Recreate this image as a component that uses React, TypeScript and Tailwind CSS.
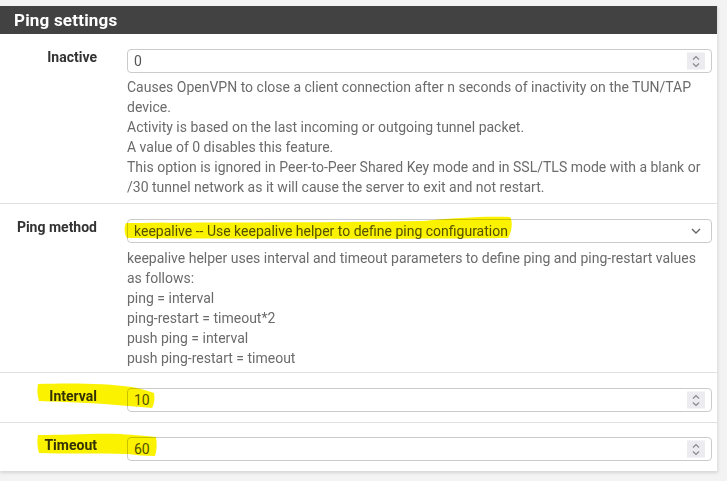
import React from "react";

const font = { fontFamily: "Roboto, 'Liberation Sans', sans-serif" };

const Spinner: React.FC = () => (
    <span className="absolute right-[6px] top-1/2 -translate-y-1/2 w-[18px] h-[17px] bg-[#ececf0] flex flex-col items-center justify-center">
        <svg width="10" height="14" viewBox="0 0 10 14" fill="none" stroke="#8a8a8a" strokeWidth="1.2">
            <path d="M2 5 L5 2 L8 5" />
            <path d="M2 9 L5 12 L8 9" />
        </svg>
    </span>
);

const NumberInput: React.FC<{ value: string }> = ({ value }) => (
    <div className="relative h-[24px] w-full rounded-[4px] border border-[#cbcbcb] bg-white flex items-center px-[6px] text-[14px] text-[#555]">
        {value}
        <Spinner />
    </div>
);

const Label: React.FC<{ children: React.ReactNode }> = ({ children }) => (
    <div className="w-[97px] shrink-0 text-right font-bold text-[14px] text-[#333] -mt-[2px]">{children}</div>
);

const Highlight: React.FC<{ className: string; d: string; w: number; h: number }> = ({ className, d, w, h }) => (
    <svg className={"absolute pointer-events-none mix-blend-multiply " + className} width={w} height={h} viewBox={`0 0 ${w} ${h}`}>
        <path d={d} fill="#fbf200" />
    </svg>
);

export default function App() {
    return (
        <div className="min-h-[481px] bg-[#f3f3f3] pt-[6px]" style={font}>
            <div className="relative w-[718px] bg-white border-r border-[#e2e2e2] shadow-[0_2px_3px_rgba(0,0,0,0.12)]">
                <div className="h-[28px] bg-[#424242] text-white font-bold text-[17px] leading-[28px] pl-[14px] tracking-[0.2px]">
                    Ping settings
                </div>

                {/* Inactive */}
                <div className="flex pt-[15px] pb-[6px] border-b border-[#e0e0e0]">
                    <Label>Inactive</Label>
                    <div className="ml-[30px] w-[585px]">
                        <NumberInput value="0" />
                        <div className="mt-[4px] text-[14px] leading-[20px] text-[#6b6b6b]">
                            Causes OpenVPN to close a client connection after n seconds of inactivity on the TUN/TAP device.<br />
                            Activity is based on the last incoming or outgoing tunnel packet.<br />
                            A value of 0 disables this feature.<br />
                            This option is ignored in Peer-to-Peer Shared Key mode and in SSL/TLS mode with a blank or /30 tunnel network as it will cause the server to exit and not restart.
                        </div>
                    </div>
                </div>

                {/* Ping method */}
                <div className="relative flex pt-[15px] pb-[4px] border-b border-[#e0e0e0]">
                    <Label>Ping method</Label>
                    <div className="ml-[30px] w-[585px]">
                        <div className="relative h-[24px] w-full rounded-[4px] border border-[#cbcbcb] bg-white flex items-center px-[6px] text-[14px] text-[#555]">
                            keepalive -- Use keepalive helper to define ping configuration
                            <svg className="absolute right-[9px] top-1/2 -translate-y-1/2" width="12" height="8" viewBox="0 0 12 8" fill="none" stroke="#666" strokeWidth="1.4">
                                <path d="M2 2 L6 6 L10 2" />
                            </svg>
                        </div>
                        <div className="mt-[5px] text-[14px] leading-[20px] text-[#6b6b6b]">
                            keepalive helper uses interval and timeout parameters to define ping and ping-restart values as follows:<br />
                            ping = interval<br />
                            ping-restart = timeout*2<br />
                            push ping = interval<br />
                            push ping-restart = timeout
                        </div>
                    </div>
                    <Highlight
                        className="left-[124px] top-[8px]"
                        w={390}
                        h={28}
                        d="M2 11 C60 10 200 11 300 9 C330 6 360 4 386 5 C389 9 388 20 384 26 C300 27 150 27 3 26 C0 22 0 14 2 11 Z"
                    />
                </div>

                {/* Interval */}
                <div className="relative flex items-start pt-[15px] pb-[10px] border-b border-[#e0e0e0]">
                    <Label>Interval</Label>
                    <div className="ml-[30px] w-[585px]">
                        <NumberInput value="10" />
                    </div>
                    <Highlight
                        className="left-[36px] top-[8px]"
                        w={120}
                        h={28}
                        d="M2 3 C30 2 70 2 96 6 C106 8 112 10 118 12 C119 18 118 24 116 27 C110 26 100 26 92 25 C60 22 30 21 3 20 C1 14 1 8 2 3 Z"
                    />
                </div>

                {/* Timeout */}
                <div className="relative flex items-start pt-[14px] pb-[10px]">
                    <Label>Timeout</Label>
                    <div className="ml-[30px] w-[585px]">
                        <NumberInput value="60" />
                    </div>
                    <Highlight
                        className="left-[36px] top-[9px]"
                        w={122}
                        h={26}
                        d="M2 3 C30 3 60 1 84 2 C100 3 112 4 120 5 C121 12 121 18 119 24 C110 24 100 23 92 22 C60 21 30 22 3 21 C1 15 1 8 2 3 Z"
                    />
                </div>
            </div>
        </div>
    );
}
